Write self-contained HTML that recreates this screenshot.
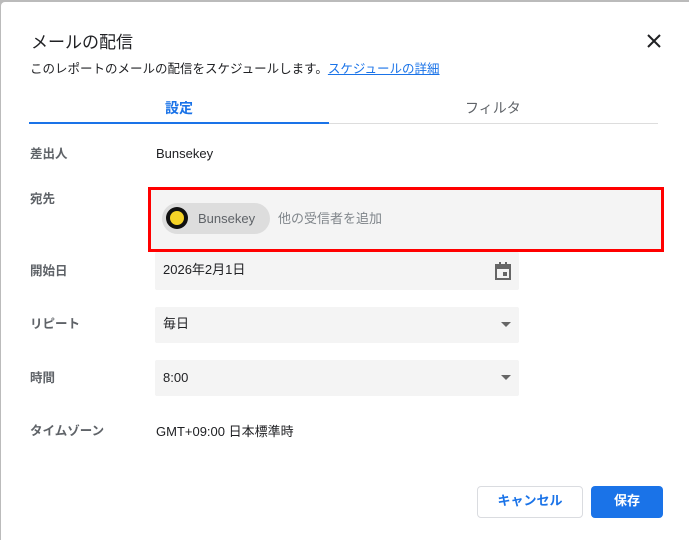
<!DOCTYPE html>
<html><head><meta charset="utf-8"><style>
*{box-sizing:border-box;margin:0;padding:0}
html,body{width:689px;height:540px;overflow:hidden}
body{background:#bbb;font-family:"Liberation Sans","Noto Sans CJK JP",sans-serif;position:relative;color:#202124}
.dlg{position:absolute;left:1px;top:2px;width:700px;height:560px;background:#fff;border-radius:4px}
.a{position:absolute}
.lbl{position:absolute;left:30px;font-size:12.5px;color:#5f6368;font-weight:bold}
.fld{position:absolute;left:155px;width:364px;background:#f4f4f4;border-radius:2px;font-size:13px;padding-left:8px}
.arr{position:absolute;right:8px;top:15px;width:0;height:0;border-left:5px solid transparent;border-right:5px solid transparent;border-top:5px solid #666}
</style></head><body>
<div class="dlg"></div>
<div class="a" style="left:31px;top:28px;font-size:17px">メールの配信</div>
<svg class="a" style="left:647px;top:34px" width="14" height="14"><path d="M1 1L13 13M13 1L1 13" stroke="#202124" stroke-width="2"/></svg>
<div class="a" style="left:30px;top:58px;font-size:12.5px">このレポートのメールの配信をスケジュールします。<span style="color:#1a73e8;text-decoration:underline">スケジュールの詳細</span></div>
<div class="a" style="left:165px;top:98px;font-size:14px;color:#1a73e8;font-weight:bold">設定</div>
<div class="a" style="left:465px;top:98px;font-size:14px;color:#5f6368">フィルタ</div>
<div class="a" style="left:29px;top:123px;width:629px;height:1px;background:#ddd"></div>
<div class="a" style="left:29px;top:122px;width:300px;height:2px;background:#1a73e8"></div>
<div class="lbl" style="top:143px">差出人</div>
<div class="a" style="left:156px;top:146px;font-size:13px">Bunsekey</div>
<div class="lbl" style="top:188px">宛先</div>
<div class="a" style="left:148px;top:187px;width:516px;height:65px;border:3px solid #f00;background:#f4f4f4"></div>
<div class="a" style="left:162px;top:203px;width:108px;height:31px;background:#ddd;border-radius:16px"></div>
<div class="a" style="left:166px;top:207px;width:22px;height:22px;background:#111;border-radius:50%"></div>
<div class="a" style="left:170px;top:211px;width:14px;height:14px;background:#f5d327;border-radius:50%"></div>
<div class="a" style="left:198px;top:211px;font-size:13px;color:#5f6368">Bunsekey</div>
<div class="a" style="left:278px;top:208px;font-size:13px;color:#80868b">他の受信者を追加</div>
<div class="lbl" style="top:260px">開始日</div>
<div class="fld" style="top:252px;height:38px;line-height:36px">2026年2月1日
<svg class="a" style="right:8px;top:10px" width="16" height="18"><rect x="1" y="3" width="14" height="14" fill="none" stroke="#666" stroke-width="2"/><rect x="1" y="3" width="14" height="4" fill="#666"/><rect x="4" y="0" width="2" height="4" fill="#666"/><rect x="10" y="0" width="2" height="4" fill="#666"/><rect x="8" y="10" width="4" height="4" fill="#666"/></svg></div>
<div class="lbl" style="top:313px">リピート</div>
<div class="fld" style="top:307px;height:36px;line-height:33px">毎日<div class="arr"></div></div>
<div class="lbl" style="top:367px">時間</div>
<div class="fld" style="top:360px;height:36px;line-height:36px">8:00<div class="arr"></div></div>
<div class="lbl" style="top:420px">タイムゾーン</div>
<div class="a" style="left:156px;top:421px;font-size:13px">GMT+09:00 日本標準時</div>
<div class="a" style="left:477px;top:486px;width:106px;height:32px;border:1px solid #dadce0;border-radius:4px;text-align:center;line-height:28px;font-size:13px;color:#1a73e8;font-weight:bold">キャンセル</div>
<div class="a" style="left:591px;top:486px;width:72px;height:32px;background:#1a73e8;border-radius:4px;text-align:center;line-height:29px;font-size:13px;color:#fff;font-weight:bold">保存</div>
</body></html>
